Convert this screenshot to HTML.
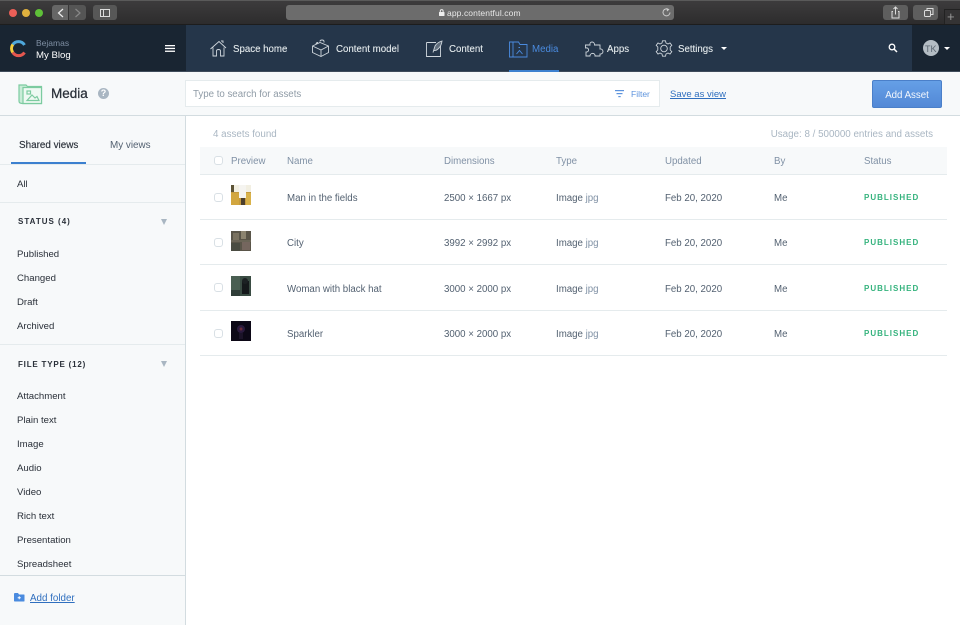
<!DOCTYPE html>
<html><head><meta charset="utf-8"><style>
html,body{margin:0;padding:0;width:960px;height:625px;overflow:hidden;background:#fff;font-family:"Liberation Sans",sans-serif}
body{filter:blur(.25px)}
.a,.t{position:absolute}
.t{white-space:nowrap;line-height:12px;font-size:9.700px;color:#536171}
.c{margin-top:2px}
.l{color:#2a3039;left:17px;font-size:9.600px;margin-top:1.500px}
.h{color:#8091a5;top:155px;margin-top:1px}
.s{color:#2a3039;font-weight:bold;font-size:8px;letter-spacing:1px;left:18px;margin-top:1px}
.n{color:#e5ebed;font-size:9.700px;top:43px;margin-top:1px;-webkit-text-stroke:.1px #e5ebed}
.p{color:#36b37e;font-weight:bold;font-size:8px;letter-spacing:1px;left:864px;margin-top:1px}
.cb{position:absolute;left:214px;width:7px;height:7px;border:1px solid #d9e0e5;border-radius:3px;background:#fff}
.row{position:absolute;left:200px;width:747px;height:1px;background:#e5ebed}
svg{position:absolute;overflow:visible}
.tri{position:absolute;width:0;height:0;border-left:3px solid transparent;border-right:3px solid transparent;border-top:3px solid #fff}
</style></head><body>
<!-- browser chrome -->
<div class="a" style="left:0;top:0;width:960px;height:25px;background:linear-gradient(#3d3c3d,#2c2b2c);"></div>
<div class="a" style="left:0;top:0;width:960px;height:1px;background:#5a5a5a"></div>
<div class="a" style="left:9px;top:9px;width:8px;height:8px;border-radius:50%;background:#ec5f57"></div>
<div class="a" style="left:22px;top:9px;width:8px;height:8px;border-radius:50%;background:#e0b13e"></div>
<div class="a" style="left:35px;top:9px;width:8px;height:8px;border-radius:50%;background:#5fc038"></div>
<div class="a" style="left:52px;top:5px;width:16px;height:15px;background:#666;border-radius:3px 0 0 3px"></div>
<div class="a" style="left:69px;top:5px;width:17px;height:15px;background:#555;border-radius:0 3px 3px 0"></div>
<div class="a" style="left:93px;top:5px;width:24px;height:15px;background:#575757;border-radius:3px"></div>
<svg style="left:0;top:0" width="120" height="25" fill="none"><path d="M63 9 L58.500 13 L63 17" stroke="#eee" stroke-width="1.200"/><path d="M75.500 9 L80 13 L75.500 17" stroke="#888" stroke-width="1.200"/><rect x="100.500" y="9.500" width="9" height="7" stroke="#ddd" stroke-width="1"/><path d="M103.500 9.500V16.500" stroke="#ddd"/></svg>
<div class="a" style="left:286px;top:5px;width:388px;height:15px;background:#6c6c6c;border-radius:3px"></div>
<div class="t" style="left:447px;top:7px;color:#e8e8e8;font-size:8.500px;letter-spacing:.1px">app.contentful.com</div>
<svg style="left:439px;top:9px" width="6" height="7"><rect x="0" y="3" width="5.500" height="4" rx=".5" fill="#eee"/><path d="M1.300 3.500V2a1.400 1.400 0 0 1 2.800 0v1.500" stroke="#eee" fill="none"/></svg>
<svg style="left:662px;top:8px" width="9" height="9" fill="none"><path d="M6.500 1.500A3.500 3.500 0 1 0 8 4.500" stroke="#ccc"/><path d="M4.500 0L7.500 1.500L5 3.500z" fill="#ccc"/></svg>
<div class="a" style="left:883px;top:5px;width:25px;height:15px;background:#5e5e5e;border-radius:3px"></div>
<div class="a" style="left:913px;top:5px;width:25px;height:15px;background:#5e5e5e;border-radius:3px"></div>
<svg style="left:883px;top:5px" width="60" height="15" fill="none" stroke="#ddd"><path d="M10 6.500H9V13H16V6.500H15M12.500 9.500V2M10.500 4L12.500 2L14.500 4"/><rect x="41.500" y="5.500" width="6" height="6" rx="1"/><path d="M44 5.500V3.500H50V9.500H47.500"/></svg>
<div class="a" style="left:944px;top:9px;width:16px;height:16px;background:#343334;border-left:1px solid #222;border-top:1px solid #222"></div>
<div class="t" style="left:947px;top:11px;color:#999;font-size:13px">+</div>
<div class="a" style="left:0;top:24px;width:960px;height:1px;background:#1d1d1d"></div>
<!-- app nav -->
<div class="a" style="left:0;top:25px;width:960px;height:46px;background:#25364a"></div>
<div class="a" style="left:0;top:25px;width:186px;height:46px;background:#192532"></div>
<div class="a" style="left:912px;top:25px;width:48px;height:46px;background:#192532"></div>
<div class="a" style="left:0;top:71px;width:960px;height:1px;background:#3f4c5b"></div>
<svg style="left:0;top:25px" width="40" height="46" fill="none" stroke-width="3"><path d="M24.500 20A7 7 0 0 0 12.500 20" stroke="#4fa8dc"/><path d="M12.800 19.500A7 7 0 0 0 12.800 27.500" stroke="#f3cd3c"/><path d="M12.800 27.500A7 7 0 0 0 24.500 27.500" stroke="#e5574f"/></svg>
<div class="t" style="left:36px;top:37px;color:#7f8fa3;font-size:8.500px">Bejamas</div>
<div class="t" style="left:36px;top:49px;color:#fff;font-size:9.600px;margin-top:1px">My Blog</div>
<svg style="left:165px;top:44px" width="10" height="9" fill="#fff"><rect y="1" width="10" height="1.300"/><rect y="3.800" width="10" height="1.300"/><rect y="6.600" width="10" height="1.300"/></svg>
<svg style="left:0;top:25px" width="960" height="46" fill="none" stroke="#cfd6dc" stroke-width=".9">
<path d="M210.500 24L219 16.500L226 23M223 18V16H221M213 22.500V31H216.500V26Q216.500 24.500 218.500 24.500Q220.500 24.500 220.500 26V31H224V22.500"/>
<path d="M312.500 21L320 17.500L328.500 21V27.500L321 31.500L312.500 27.500ZM312.500 21L321 25L328.500 21M321 25V31.500M316 19.500Q316 17.500 318 17.500M320 16.500Q320 15 322 15Q324 15 324 16.500L324 17.500"/>
<path d="M426.500 17.500H436M426.500 17.500V31.500H440.500V21"/><path d="M433 27.500L435 21Q437 17.500 442 16Q441.500 21 438 24Q436 26 434 25.500" fill="#cfd6dc" fill-opacity=".35"/>
<path stroke="#4a8bdf" d="M509.500 17V32H527V19.500H520L518.500 17ZM513 17V32M516.500 29L519.500 25.500L522.500 29M518.500 22.500h1.500"/>
<path d="M590 20C589 16 595 16 594.500 20H600V24C604 23.500 604 29.500 600 29V31H595C595.500 27.500 590 27.500 590 31H586V27C589.500 27.500 589.500 22 585.500 23V20Z"/>
<circle cx="664" cy="23.500" r="3.300"/><path d="M662.500 15.800H665.500L666 18L668 19L670 18L671.800 20.300L670.200 22V25L671.800 26.700L670 29L668 28L666 29L665.500 31.200H662.500L662 29L660 28L658 29L656.200 26.700L657.800 25V22L656.200 20.300L658 18L660 19L662 18Z"/>
<circle cx="892" cy="22" r="2.800" stroke="#fff" stroke-width="1.300"/><path d="M894 24L897 27" stroke="#fff" stroke-width="1.500"/>
</svg>
<div class="t n" style="left:233px">Space home</div>
<div class="t n" style="left:336px">Content model</div>
<div class="t n" style="left:449px">Content</div>
<div class="t n" style="left:532px;color:#4a8bdf;-webkit-text-stroke:0">Media</div>
<div class="t n" style="left:607px">Apps</div>
<div class="t n" style="left:678px">Settings</div>
<div class="tri" style="left:721px;top:47px"></div>
<div class="a" style="left:509px;top:70px;width:50px;height:2px;background:#3c80cf"></div>
<div class="a" style="left:923px;top:40px;width:16px;height:16px;border-radius:50%;background:#b4bdc4"></div>
<div class="t" style="left:925px;top:43px;color:#5a6570;font-size:9px">TK</div>
<div class="tri" style="left:944px;top:47px"></div>
<!-- toolbar -->
<div class="a" style="left:0;top:72px;width:960px;height:43px;background:#f7f9fa"></div>
<div class="a" style="left:0;top:115px;width:960px;height:1px;background:#d3dce0"></div>
<svg style="left:18px;top:83px" width="26" height="22" fill="none" stroke="#7ccba0" stroke-width="1.200"><path d="M1 2H8L9.500 3.500H23.500V20.500H4.500Q1 20.500 1 18Z" fill="#c9ecd8"/><path d="M5 4.500H23.500V20.500H5Z" fill="#eef9f3"/><rect x="9" y="8" width="3.500" height="3" /><path d="M9 17.500L14 12L17 15L19 13.500L21 17.500H9Z"/></svg>
<div class="t" style="left:51px;top:86px;color:#2a3039;font-size:13.500px;line-height:16px;font-weight:400;-webkit-text-stroke:.25px #2a3039">Media</div>
<div class="a" style="left:98px;top:88px;width:11px;height:11px;border-radius:50%;background:#a9b6c2;color:#fff;font:bold 9px/11px 'Liberation Sans',sans-serif;text-align:center">?</div>
<div class="a" style="left:185px;top:80px;width:473px;height:25px;background:#fff;border:1px solid #e5ebed"></div>
<div class="t" style="left:193px;top:88px;color:#8f9ba6;font-size:9.700px;margin-top:.5px">Type to search for assets</div>
<svg style="left:615px;top:90px" width="10" height="8" fill="#5d93dd"><rect x="0" width="9" height="1.200"/><rect x="1.500" y="3" width="6" height="1.200"/><rect x="3.300" y="6" width="2.400" height="1.200"/></svg>
<div class="t" style="left:631px;top:88px;color:#5d93dd;font-size:8.500px">Filter</div>
<div class="t" style="left:670px;top:88px;color:#2f6fbf;font-size:9.500px;text-decoration:underline;margin-top:1px">Save as view</div>
<div class="a" style="left:872px;top:80px;width:68px;height:26px;background:linear-gradient(#659fe6,#5288d6);border:1px solid #4a7fc9;border-radius:2px;color:#f4f8fd;font-size:9.700px;line-height:29px;text-align:center">Add Asset</div>
<!-- sidebar -->
<div class="a" style="left:0;top:116px;width:185px;height:509px;background:#f7f9fa"></div>
<div class="a" style="left:185px;top:116px;width:1px;height:509px;background:#d3dce0"></div>
<div class="a" style="left:0;top:164px;width:185px;height:1px;background:#e5ebed"></div>
<div class="a" style="left:11px;top:162px;width:75px;height:2px;background:#3c80cf"></div>
<div class="t" style="left:19px;top:139px;color:#2a3039;font-size:9.900px;margin-top:1px;-webkit-text-stroke:.15px #2a3039">Shared views</div>
<div class="t" style="left:110px;top:139px;font-size:9.900px;margin-top:1px">My views</div>
<div class="t l" style="top:177px">All</div>
<div class="a" style="left:0;top:202px;width:185px;height:1px;background:#e5ebed"></div>
<div class="t s" style="top:215px">STATUS (4)</div>
<div class="a" style="left:161px;top:219px;width:0;height:0;border-left:3px solid transparent;border-right:3px solid transparent;border-top:6px solid #a9b6c2"></div>
<div class="t l" style="top:247px">Published</div>
<div class="t l" style="top:271px">Changed</div>
<div class="t l" style="top:295px">Draft</div>
<div class="t l" style="top:319px">Archived</div>
<div class="a" style="left:0;top:344px;width:185px;height:1px;background:#e5ebed"></div>
<div class="t s" style="top:358px;letter-spacing:.8px">FILE TYPE (12)</div>
<div class="a" style="left:161px;top:361px;width:0;height:0;border-left:3px solid transparent;border-right:3px solid transparent;border-top:6px solid #a9b6c2"></div>
<div class="t l" style="top:389px">Attachment</div>
<div class="t l" style="top:413px">Plain text</div>
<div class="t l" style="top:437px">Image</div>
<div class="t l" style="top:461px">Audio</div>
<div class="t l" style="top:485px">Video</div>
<div class="t l" style="top:509px">Rich text</div>
<div class="t l" style="top:533px">Presentation</div>
<div class="t l" style="top:557px">Spreadsheet</div>
<div class="a" style="left:0;top:575px;width:185px;height:1px;background:#d3dce0"></div>
<svg style="left:14px;top:593px" width="11" height="9"><path d="M0 1Q0 0 1 0H4L5 1.500H10Q10.500 1.500 10.500 2V8Q10.500 8.500 10 8.500H1Q0 8.500 0 8Z" fill="#4a8bdf"/><path d="M3.700 4.800H6.800M5.250 3.300V6.300" stroke="#fff" stroke-width="1"/></svg>
<div class="t" style="left:30px;top:592px;color:#2f6fbf;text-decoration:underline;margin-top:1px;font-size:9.800px">Add folder</div>
<!-- table -->
<div class="t" style="left:213px;top:128px;color:#a9b6c2;font-size:9.800px;margin-top:1px">4 assets found</div>
<div class="t" style="right:27px;top:128px;color:#a9b6c2;font-size:9.800px;margin-top:1px">Usage: 8 / 500000 entries and assets</div>
<div class="a" style="left:200px;top:147px;width:747px;height:27px;background:#f7f9fa"></div>
<div class="row" style="top:174px;background:#e5ebed"></div>
<div class="cb" style="top:156px"></div>
<div class="t h" style="left:231px">Preview</div>
<div class="t h" style="left:287px">Name</div>
<div class="t h" style="left:444px">Dimensions</div>
<div class="t h" style="left:556px">Type</div>
<div class="t h" style="left:665px">Updated</div>
<div class="t h" style="left:774px">By</div>
<div class="t h" style="left:864px">Status</div>

<div class="row" style="top:219px"></div>
<div class="row" style="top:264px"></div>
<div class="row" style="top:310px"></div>
<div class="row" style="top:355px"></div>
<div class="cb" style="top:193px"></div><div class="cb" style="top:238px"></div><div class="cb" style="top:283px"></div><div class="cb" style="top:329px"></div>

<svg style="left:231px;top:185px" width="20" height="20"><rect width="20" height="20" fill="#c49a3e"/><rect y="0" width="20" height="7" fill="#f2efe2"/><rect x="8" y="0" width="7" height="13" fill="#f5f4f0"/><rect x="0" y="8" width="8" height="12" fill="#d2a63f"/><rect x="15" y="8" width="5" height="12" fill="#d9b24a"/><rect x="10" y="13" width="4" height="7" fill="#4d3f2c"/><rect x="0" y="0" width="3" height="7" fill="#5c5336"/></svg>
<svg style="left:231px;top:231px" width="20" height="20"><rect width="20" height="20" fill="#5a5549"/><rect x="2" y="2" width="6" height="7" fill="#7a7260"/><rect x="10" y="0" width="5" height="8" fill="#8c8470"/><rect x="0" y="12" width="9" height="8" fill="#4a4c42"/><rect x="11" y="11" width="8" height="8" fill="#75665e"/><rect x="0" y="9" width="20" height="2" fill="#6b6557"/></svg>
<svg style="left:231px;top:276px" width="20" height="20"><rect width="20" height="20" fill="#3a4c43"/><rect x="0" y="0" width="9" height="20" fill="#4a5f52"/><rect x="11" y="5" width="7" height="13" fill="#15191b"/><circle cx="14" cy="5" r="3" fill="#1c2123"/><rect x="0" y="14" width="9" height="6" fill="#2f3d38"/></svg>
<svg style="left:231px;top:321px" width="20" height="20"><rect width="20" height="20" fill="#0c0816"/><circle cx="10" cy="8" r="4" fill="#2a1a3d"/><circle cx="10" cy="8" r="1.500" fill="#6a2b3a"/><rect x="8" y="12" width="4" height="6" fill="#1b1328"/></svg>

<div class="t c" style="left:287px;top:191px">Man in the fields</div>
<div class="t c" style="left:287px;top:236px">City</div>
<div class="t c" style="left:287px;top:282px">Woman with black hat</div>
<div class="t c" style="left:287px;top:327px">Sparkler</div>
<div class="t c" style="left:444px;top:191px">2500 × 1667 px</div>
<div class="t c" style="left:444px;top:236px">3992 × 2992 px</div>
<div class="t c" style="left:444px;top:282px">3000 × 2000 px</div>
<div class="t c" style="left:444px;top:327px">3000 × 2000 px</div>
<div class="t c" style="left:556px;top:191px">Image <span style="color:#8091a5">jpg</span></div>
<div class="t c" style="left:556px;top:236px">Image <span style="color:#8091a5">jpg</span></div>
<div class="t c" style="left:556px;top:282px">Image <span style="color:#8091a5">jpg</span></div>
<div class="t c" style="left:556px;top:327px">Image <span style="color:#8091a5">jpg</span></div>
<div class="t c" style="left:665px;top:191px">Feb 20, 2020</div>
<div class="t c" style="left:665px;top:236px">Feb 20, 2020</div>
<div class="t c" style="left:665px;top:282px">Feb 20, 2020</div>
<div class="t c" style="left:665px;top:327px">Feb 20, 2020</div>
<div class="t c" style="left:774px;top:191px">Me</div>
<div class="t c" style="left:774px;top:236px">Me</div>
<div class="t c" style="left:774px;top:282px">Me</div>
<div class="t c" style="left:774px;top:327px">Me</div>
<div class="t p" style="top:191px">PUBLISHED</div>
<div class="t p" style="top:236px">PUBLISHED</div>
<div class="t p" style="top:282px">PUBLISHED</div>
<div class="t p" style="top:327px">PUBLISHED</div>
</body></html>
